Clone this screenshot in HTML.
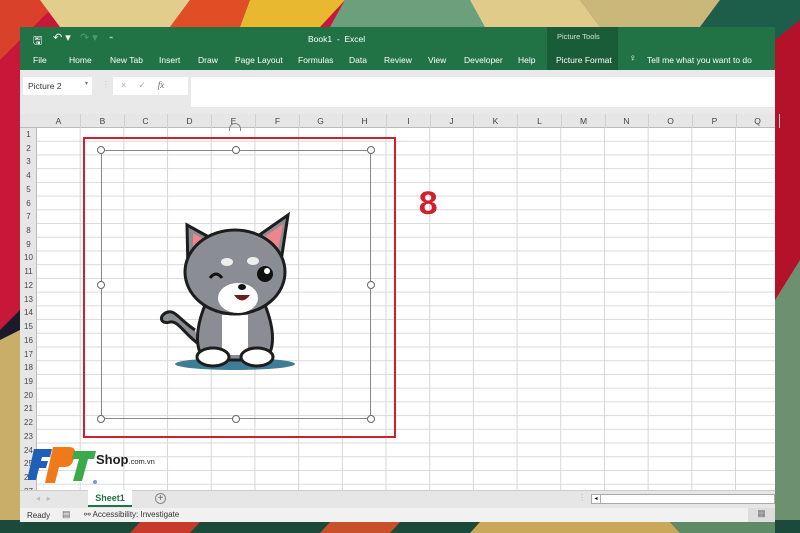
<!DOCTYPE html>
<html><head><meta charset="utf-8"><style>
*{margin:0;padding:0;box-sizing:border-box}
body{width:800px;height:533px;overflow:hidden;position:relative;font-family:"Liberation Sans",sans-serif;background:#c8183a}
.abs{position:absolute}
.t{position:absolute;color:#fff;font-size:8.5px;white-space:nowrap}
.ch{position:absolute;top:114px;height:14px;font-size:8.5px;color:#444;text-align:center;line-height:15px;width:44px;border-right:1px solid #d0d0d0}
.rh{position:absolute;left:20px;width:17px;font-size:8px;color:#444;text-align:center;height:13.7px;line-height:14px}
.h{position:absolute;width:8px;height:8px;border:1px solid #666;border-radius:50%;background:#fff}
</style></head><body>
<svg class="abs" style="left:0;top:0" width="800" height="533">
<rect width="800" height="533" fill="#c8183a"/>
<polygon points="0,0 60,0 20,40 0,60" fill="#d9412b"/>
<polygon points="40,0 190,0 170,27 60,27" fill="#e2cd8c"/>
<polygon points="190,0 250,0 240,27 170,27" fill="#e04e25"/>
<polygon points="250,0 345,0 320,27 240,27" fill="#e8b830"/>
<polygon points="345,0 480,0 490,27 330,27" fill="#6c9f7c"/>
<polygon points="470,0 580,0 600,27 485,27" fill="#e0cb8a"/>
<polygon points="580,0 720,0 700,27 600,27" fill="#c9b87a"/>
<polygon points="720,0 800,0 800,60 775,60 775,27 700,27" fill="#1c5e4a"/>
<polygon points="775,40 800,20 800,533 775,533" fill="#b3122a"/>
<polygon points="775,300 800,260 800,533 775,533" fill="#6c9070"/>
<polygon points="0,330 20,310 20,400 0,420" fill="#1a1a2a"/>
<polygon points="0,340 20,330 20,533 0,533" fill="#c9ae6a"/>
<polygon points="0,520 800,520 800,533 0,533" fill="#1c4a3a"/>
<polygon points="140,522 200,522 190,533 130,533" fill="#c83a2a"/>
<polygon points="330,522 400,522 390,533 320,533" fill="#c8502a"/>
<polygon points="480,522 670,522 680,533 470,533" fill="#c9a85a"/>
<polygon points="670,522 775,522 775,533 680,533" fill="#5f8a66"/>
</svg>
<div class="abs" style="left:20px;top:27px;width:755px;height:495px;background:#fff"></div>
<div class="abs" style="left:20px;top:27px;width:755px;height:43px;background:#217346"></div>
<div class="abs" style="left:547px;top:27px;width:71px;height:43px;background:#1a5c38"></div>
<div class="t" style="left:557px;top:32px;font-size:7.5px;color:#cfe3d6">Picture Tools</div>
<div class="t" style="left:33px;top:32px;font-size:11px">🖫</div>
<div class="t" style="left:53px;top:31px;font-size:11px">↶ ▾</div>
<div class="t" style="left:80px;top:31px;font-size:11px;color:#4f9a6e">↷ ▾</div>
<div class="t" style="left:109px;top:32px;font-size:8px">₌</div>
<div class="t" style="left:308px;top:34px">Book1 &nbsp;-&nbsp; Excel</div>
<div class="t" style="left:33px;top:55px">File</div>
<div class="t" style="left:69px;top:55px">Home</div>
<div class="t" style="left:110px;top:55px">New Tab</div>
<div class="t" style="left:159px;top:55px">Insert</div>
<div class="t" style="left:198px;top:55px">Draw</div>
<div class="t" style="left:235px;top:55px">Page Layout</div>
<div class="t" style="left:298px;top:55px">Formulas</div>
<div class="t" style="left:349px;top:55px">Data</div>
<div class="t" style="left:384px;top:55px">Review</div>
<div class="t" style="left:428px;top:55px">View</div>
<div class="t" style="left:464px;top:55px">Developer</div>
<div class="t" style="left:518px;top:55px">Help</div>
<div class="t" style="left:556px;top:55px">Picture Format</div>
<div class="t" style="left:629px;top:53px;font-size:10px">♀</div>
<div class="t" style="left:647px;top:55px">Tell me what you want to do</div>
<div class="abs" style="left:20px;top:70px;width:755px;height:44px;background:#e9e9e9"></div>
<div class="abs" style="left:23px;top:77px;width:69px;height:18px;background:#fff;font-size:8.5px;color:#333;padding:4px 5px">Picture 2<span style="position:absolute;right:4px;top:3px;font-size:6px;color:#777">▾</span></div>
<div class="abs" style="left:102px;top:80px;font-size:8px;color:#bbb">⋮</div>
<div class="abs" style="left:113px;top:77px;width:75px;height:18px;background:#fff;font-size:9px;color:#aaa;padding:3px 8px;letter-spacing:12px">×✓<i style="color:#666;font-family:'Liberation Serif';letter-spacing:0">fx</i></div>
<div class="abs" style="left:191px;top:77px;width:584px;height:30px;background:#fff"></div>
<div class="abs" style="left:20px;top:114px;width:755px;height:14px;background:#e6e6e6;border-bottom:1px solid #bbb"></div>
<div class="abs" style="left:20px;top:128px;width:17px;height:362px;background:#e6e6e6;border-right:1px solid #bbb"></div>
<div class="abs" style="left:37px;top:128px;width:738px;height:362px;background-image:linear-gradient(90deg,#d6d6d6 1px,transparent 1px),linear-gradient(#dadada 1px,transparent 1px);background-size:43.7px 100%,100% 13.72px;background-position:-1px 0,0 -1px"></div>
<div class="ch" style="left:37px">A</div><div class="ch" style="left:81px">B</div><div class="ch" style="left:124px">C</div><div class="ch" style="left:168px">D</div><div class="ch" style="left:212px">E</div><div class="ch" style="left:256px">F</div><div class="ch" style="left:299px">G</div><div class="ch" style="left:343px">H</div><div class="ch" style="left:387px">I</div><div class="ch" style="left:430px">J</div><div class="ch" style="left:474px">K</div><div class="ch" style="left:518px">L</div><div class="ch" style="left:562px">M</div><div class="ch" style="left:605px">N</div><div class="ch" style="left:649px">O</div><div class="ch" style="left:693px">P</div><div class="ch" style="left:736px">Q</div>
<div id="rows"></div>
<script>
var s='';for(var i=1;i<=27;i++){s+='<div class="rh" style="top:'+(128+(i-1)*13.72)+'px">'+i+'</div>'}document.getElementById('rows').innerHTML=s;
</script>
<div class="abs" style="left:83px;top:137px;width:313px;height:301px;border:2.5px solid #d0202e"></div>
<div class="abs" style="left:101px;top:150px;width:270px;height:269px;border:1px solid #888"></div>
<div class="h" style="left:97px;top:146px"></div><div class="h" style="left:232px;top:146px"></div><div class="h" style="left:367px;top:146px"></div>
<div class="h" style="left:97px;top:281px"></div><div class="h" style="left:367px;top:281px"></div>
<div class="h" style="left:97px;top:415px"></div><div class="h" style="left:232px;top:415px"></div><div class="h" style="left:367px;top:415px"></div>
<div class="abs" style="left:229px;top:123px;width:12px;height:8px;border:1.5px solid #888;border-bottom:none;border-radius:6px 6px 0 0"></div>
<div class="abs" style="left:418px;top:187px;font-size:34px;font-weight:bold;color:#d0202e;font-family:'Liberation Mono',monospace">8</div>
<svg class="abs" style="left:150px;top:200px" width="170" height="180" viewBox="0 0 170 180">
<ellipse cx="85" cy="164" rx="60" ry="6" fill="#3f7c96"/>
<path d="M45 130 C30 120 25 110 18 112 C8 115 10 125 20 122 C28 120 35 135 50 145" fill="#8a8d93" stroke="#1d1d1d" stroke-width="3"/>
<path d="M55 105 C45 130 45 150 55 160 L115 160 C125 150 125 130 115 105 Z" fill="#8a8d93" stroke="#1d1d1d" stroke-width="3"/>
<path d="M72 115 L98 115 L98 155 L72 155 Z" fill="#fff"/>
<ellipse cx="63" cy="157" rx="16" ry="9" fill="#fff" stroke="#1d1d1d" stroke-width="3"/>
<ellipse cx="107" cy="157" rx="16" ry="9" fill="#fff" stroke="#1d1d1d" stroke-width="3"/>
<path d="M38 70 L37 25 L68 42 Z" fill="#8a8d93" stroke="#1d1d1d" stroke-width="3"/>
<path d="M130 68 L138 15 L105 38 Z" fill="#8a8d93" stroke="#1d1d1d" stroke-width="3"/>
<path d="M43 62 L43 33 L62 44 Z" fill="#f0848e"/>
<path d="M126 60 L133 24 L110 40 Z" fill="#f0848e"/>
<ellipse cx="85" cy="72" rx="50" ry="42" fill="#8a8d93" stroke="#1d1d1d" stroke-width="3"/>
<ellipse cx="88" cy="98" rx="20" ry="15" fill="#fff"/>
<ellipse cx="77" cy="62" rx="6" ry="4" fill="#eee"/><ellipse cx="103" cy="61" rx="6" ry="4" fill="#eee"/>
<circle cx="115" cy="74" r="8" fill="#111"/><circle cx="117" cy="71" r="3" fill="#fff"/>
<path d="M60 78 Q66 70 72 78" fill="none" stroke="#111" stroke-width="3"/>
<ellipse cx="92" cy="87" rx="4" ry="3" fill="#111"/>
<path d="M84 95 Q92 106 100 95 Z" fill="#6b1f1f"/>
</svg>
<svg class="abs" style="left:28px;top:445px" width="70" height="40">
<path d="M6 4 h18 l-2 8 h-8 l-1 4 h7 l-2 7 h-7 l-3 12 h-9 z" fill="#1f5fb8"/>
<path d="M25 2 h16 c5 0 7 3 6 8 l-2 6 c-1 4 -4 6 -9 6 h-5 l-4 16 h-10 z" fill="#f07a1a"/>
<path d="M46 6 h22 l-2 8 h-6 l-6 22 h-9 l6 -22 h-7 z" fill="#3caa4a"/>
<circle cx="67" cy="37" r="2" fill="#7a9ac8"/>
</svg>
<div class="abs" style="left:96px;top:452px;font-size:13px;font-weight:bold;color:#222">Shop<span style="font-size:7.5px;font-weight:normal">.com.vn</span></div>
<div class="abs" style="left:20px;top:490px;width:755px;height:18px;background:#e6e6e6;border-top:1px solid #ccc"></div>
<div class="abs" style="left:36px;top:494px;font-size:8px;color:#bbb">◂ &nbsp; ▸</div>
<div class="abs" style="left:88px;top:490px;width:44px;height:17px;background:#fff;border-bottom:2px solid #217346;font-size:9px;font-weight:bold;color:#217346;text-align:center;line-height:16px">Sheet1</div>
<div class="abs" style="left:155px;top:493px;width:11px;height:11px;border:1px solid #888;border-radius:50%;font-size:10px;line-height:9px;text-align:center;color:#666">+</div>
<div class="abs" style="left:578px;top:493px;font-size:8px;color:#aaa">⋮</div>
<div class="abs" style="left:591px;top:494px;width:184px;height:10px;background:#fff;border:1px solid #aaa"></div>
<div class="abs" style="left:592px;top:495px;width:9px;height:8px;border-right:1px solid #aaa;font-size:6px;line-height:8px;text-align:center">◂</div>
<div class="abs" style="left:20px;top:508px;width:755px;height:14px;background:#f1f1f1"></div>
<div class="abs" style="left:748px;top:508px;width:27px;height:14px;background:#ddd;font-size:9px;color:#777;text-align:center">▦</div>
<div class="abs" style="left:27px;top:511px;font-size:8px;color:#333">Ready</div>
<div class="abs" style="left:62px;top:509px;font-size:9px;color:#666">▤</div>
<div class="abs" style="left:84px;top:510px;font-size:8px;color:#333">⚯ Accessibility: Investigate</div>
</body></html>
